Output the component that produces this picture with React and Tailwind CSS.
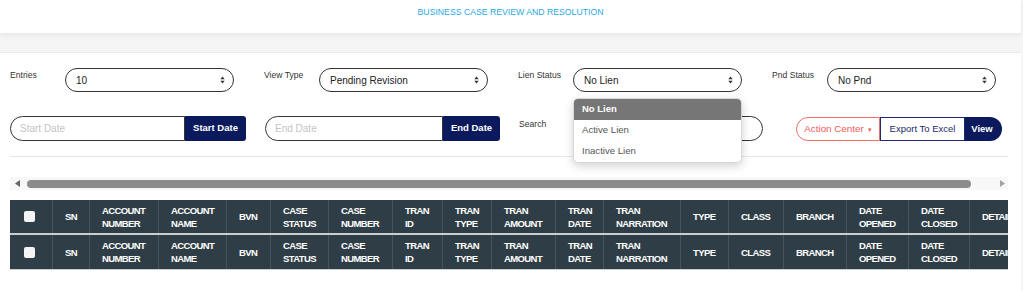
import React from "react";

const cols = [
  { w: 42, a: null, b: null, check: true },
  { w: 37, a: "SN" },
  { w: 69, a: "ACCOUNT", b: "NUMBER" },
  { w: 68, a: "ACCOUNT", b: "NAME" },
  { w: 44, a: "BVN" },
  { w: 58, a: "CASE", b: "STATUS" },
  { w: 64, a: "CASE", b: "NUMBER" },
  { w: 50, a: "TRAN", b: "ID" },
  { w: 49, a: "TRAN", b: "TYPE" },
  { w: 64, a: "TRAN", b: "AMOUNT" },
  { w: 48, a: "TRAN", b: "DATE" },
  { w: 77, a: "TRAN", b: "NARRATION" },
  { w: 48, a: "TYPE" },
  { w: 55, a: "CLASS" },
  { w: 63, a: "BRANCH" },
  { w: 62, a: "DATE", b: "OPENED" },
  { w: 61, a: "DATE", b: "CLOSED" },
  { w: 70, a: "DETAILS" },
];

function Arrows() {
  return (
    <svg width="5" height="8" viewBox="0 0 5 8" className="shrink-0">
      <path d="M2.5 0.5 L4.7 3.2 L0.3 3.2 Z" fill="#333" />
      <path d="M2.5 7.5 L4.7 4.8 L0.3 4.8 Z" fill="#333" />
    </svg>
  );
}

function SelectGroup({ label, value }) {
  return (
    <div className="flex">
      <div className="w-[55px] text-[8.6px] text-[#333] pt-[1px] leading-[12px]">{label}</div>
      <div className="w-[169px] h-[24px] rounded-full border border-[#333] flex items-center justify-between pl-[10px] pr-[8px]">
        <span className="text-[10px] text-[#222]">{value}</span>
        <Arrows />
      </div>
    </div>
  );
}

function HeaderRow({ last }) {
  return (
    <div
      className={
        "flex h-[35px] bg-[#2f3e46] " +
        (last ? "border-b border-[#c9ced1]" : "border-b-[2px] border-[#c9ced1]")
      }
    >
      {cols.map((c, i) => (
        <div
          key={i}
          style={{ width: c.w }}
          className={
            "shrink-0 h-full flex items-center text-white font-bold text-[9.5px] leading-[13px] tracking-[-0.6px] " +
            (i > 0 ? "border-l border-[#46535a] pl-[12px]" : "pl-[14px]")
          }
        >
          {c.check ? (
            <div className="w-[11px] h-[11px] rounded-[2px] bg-[#f4f4f4]" />
          ) : (
            <div className="whitespace-nowrap">
              <div>{c.a}</div>
              {c.b && <div>{c.b}</div>}
            </div>
          )}
        </div>
      ))}
    </div>
  );
}

export default function App() {
  return (
    <div className="w-[1023px] h-[291px] bg-[#f5f5f5] overflow-hidden font-['Liberation_Sans',Arial,sans-serif]">
      <div className="w-[1021px] h-[33px] bg-white shadow-[0_2px_6px_rgba(0,0,0,0.07)] flex justify-center pt-[7px]">
        <span className="text-[8.7px] text-[#29a9e1] leading-[10px]">
          BUSINESS CASE REVIEW AND RESOLUTION
        </span>
      </div>

      <div className="mt-[19px] w-[1021px] h-[239px] bg-white border-t border-[#ebebeb] relative px-[10px] pt-[15px]">
        <div className="flex gap-[30px]">
          <SelectGroup label="Entries" value="10" />
          <SelectGroup label="View Type" value="Pending Revision" />
          <SelectGroup label="Lien Status" value="No Lien" />
          <SelectGroup label="Pnd Status" value="No Pnd" />
        </div>

        <div className="flex mt-[24px] items-start">
          <div className="flex h-[25px]">
            <div className="w-[175px] h-full rounded-l-full border border-[#333] flex items-center pl-[9px] text-[10px] text-[#c4c4c4]">
              Start Date
            </div>
            <div className="w-[61px] h-full bg-[#0b1a5c] rounded-r-[3px] flex items-center justify-center text-white font-bold text-[9.5px]">
              Start Date
            </div>
          </div>
          <div className="flex h-[25px] ml-[19px]">
            <div className="w-[178px] h-full rounded-l-full border border-[#333] flex items-center pl-[9px] text-[10px] text-[#c4c4c4]">
              End Date
            </div>
            <div className="w-[57px] h-full bg-[#0b1a5c] rounded-r-[3px] flex items-center justify-center text-white font-bold text-[9.5px]">
              End Date
            </div>
          </div>
          <div className="flex ml-[19px]">
            <div className="w-[54px] text-[8.6px] text-[#333] pt-[2px] leading-[12px]">Search</div>
            <div className="w-[190px] h-[25px] rounded-full border border-[#333]" />
          </div>
          <div className="flex ml-[33px] h-[24px] mt-[1px]">
            <div className="w-[84px] h-full rounded-l-full border border-[#f26b6b] flex items-center justify-center gap-[4px] text-[#f05a5a] text-[9.8px]">
              <span>Action Center</span>
              <span className="text-[7px] leading-none">▾</span>
            </div>
            <div className="w-[85px] h-full border border-[#1b2a6b] flex items-center justify-center text-[#1b2a6b] text-[9.5px]">
              Export To Excel
            </div>
            <div className="w-[37px] h-full rounded-r-full bg-[#0b1a5c] flex items-center justify-center text-white font-bold text-[9.5px] pr-[3px]">
              View
            </div>
          </div>
        </div>

        <div className="mt-[15px] w-[998px] border-t border-[#e6e6e6]" />

        <div className="mt-[20px] w-[998px] h-[13px] bg-[#f8f8f8] flex items-center">
          <svg width="5" height="7" viewBox="0 0 5 7" className="ml-[5px]">
            <path d="M0 3.5 L5 0 L5 7 Z" fill="#666" />
          </svg>
          <div className="ml-[7px] w-[944px] h-[8px] rounded-full bg-[#8c8c8c]" />
          <svg width="5" height="7" viewBox="0 0 5 7" className="ml-[29px]">
            <path d="M5 3.5 L0 0 L0 7 Z" fill="#a3a3a3" />
          </svg>
        </div>

        <div className="mt-[10px] w-[998px] overflow-hidden">
          <div className="w-max">
            <HeaderRow />
            <HeaderRow last />
          </div>
        </div>

        <div className="absolute left-[573px] top-[45px] w-[169px] bg-white rounded-[5px] border border-[#d8d8d8] shadow-[0_3px_10px_rgba(0,0,0,0.18)] overflow-hidden">
          <div className="h-[21px] bg-[#767676] flex items-center pl-[8px] text-white font-bold text-[9.5px]">
            No Lien
          </div>
          <div className="h-[21px] flex items-center pl-[8px] text-[#555] text-[9.6px]">Active Lien</div>
          <div className="h-[21px] flex items-center pl-[8px] text-[#555] text-[9.6px]">Inactive Lien</div>
        </div>
      </div>
    </div>
  );
}
